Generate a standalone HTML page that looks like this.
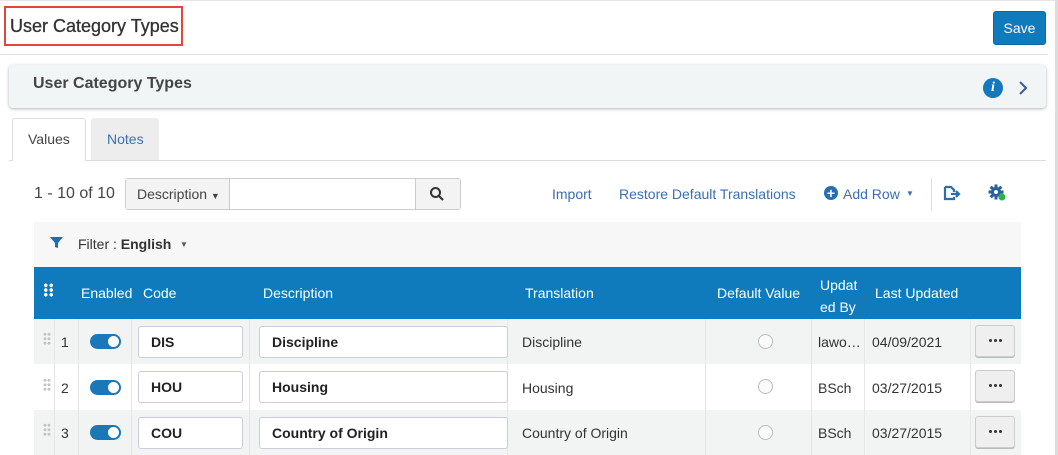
<!DOCTYPE html>
<html><head><meta charset="utf-8"><style>
*{box-sizing:border-box;margin:0;padding:0}
body{width:1058px;height:455px;overflow:hidden;background:#fff;font-family:"Liberation Sans",sans-serif;color:#333;position:relative}
.a{position:absolute}
.t{font-size:14px;white-space:nowrap}
.hd{color:#fff;font-size:14px;position:absolute;white-space:nowrap}
.inp{position:absolute;background:#fff;border:1px solid #ccd;border-radius:3px;font-weight:bold;font-size:14px;padding:7px 0 0 12px;color:#222}
.tog{position:absolute;width:31px;height:15px;background:#1a78b8;border-radius:8px}
.tog:after{content:"";position:absolute;right:2px;top:2px;width:11px;height:11px;border-radius:50%;background:#fff}
.rad{position:absolute;width:15px;height:15px;border-radius:50%;border:1px solid #bbb;background:#fafafa}
.btn{position:absolute;width:40px;height:32px;border:1px solid #ccc;border-radius:3px;background:#efefef;box-shadow:0 1px 0 #bbb}
.btn:after{content:"";position:absolute;left:13px;top:13px;width:3px;height:3px;border-radius:50%;background:#333;box-shadow:5px 0 #333,10px 0 #333}
.vl{position:absolute;width:1px;background:#e6e6e6}
.dots{position:absolute;width:8px;height:14px;background-image:radial-gradient(circle,#c4c4c4 1.4px,transparent 1.6px);background-size:4px 4.5px}
</style></head><body>
<div class="a" style="left:0;top:0;width:1058px;height:1px;background:#e6e6e6"></div>
<div class="a" style="left:1055px;top:0;width:3px;height:455px;background:#ddd"></div>
<div class="a" style="left:4px;top:6px;width:179px;height:40px;border:2px solid #e2463c"></div>
<div class="a" style="left:10px;top:16px;font-size:18px;color:#333;-webkit-text-stroke:0.3px #333">User Category Types</div>
<div class="a" style="left:0;top:54px;width:1048px;height:1px;background:#dedede"></div>
<div class="a" style="left:993px;top:11px;width:53px;height:34px;background:#0f7abc;border-radius:3px;color:#fff;font-size:14px;text-align:center;line-height:33px;border:1px solid #0b67a0">Save</div>
<div class="a" style="left:9px;top:65px;width:1037px;height:43px;background:#f2f5f6;border-radius:4px;box-shadow:0 1px 3px rgba(0,0,0,.3)"></div>
<div class="a" style="left:33px;top:75px;font-size:16px;font-weight:bold;color:#444">User Category Types</div>
<div class="a" style="left:983px;top:78px;width:20px;height:20px;border-radius:50%;background:#1478bd;color:#fff;font:italic bold 14px 'Liberation Serif',serif;text-align:center;line-height:20px">i</div>
<svg class="a" style="left:1017px;top:80px" width="12" height="16"><path d="M3 2l6 6-6 6" stroke="#3a5a99" stroke-width="2" fill="none"/></svg>
<div class="a" style="left:9px;top:160px;width:1037px;height:1px;background:#dcdcdc"></div>
<div class="a" style="left:12px;top:118px;width:74px;height:43px;background:#fff;border:1px solid #ddd;border-bottom:none;border-radius:3px 3px 0 0"></div>
<div class="a t" style="left:28px;top:131px;color:#444">Values</div>
<div class="a" style="left:91px;top:118px;width:68px;height:42px;background:#ededed;border-radius:3px 3px 0 0"></div>
<div class="a t" style="left:107px;top:131px;color:#3a6fb0">Notes</div>
<div class="a" style="left:34px;top:185px;font-size:16px;color:#444">1 - 10 of 10</div>
<div class="a" style="left:125px;top:178px;width:336px;height:32px;border:1px solid #ccc;border-radius:3px;background:#fff"></div>
<div class="a" style="left:126px;top:179px;width:104px;height:30px;background:#f3f3f3;border-right:1px solid #ccc"></div>
<div class="a t" style="left:137px;top:186px;color:#444">Description <span style="font-size:9px">▼</span></div>
<div class="a" style="left:415px;top:179px;width:45px;height:30px;background:#f3f3f3;border-left:1px solid #ccc"></div>
<svg class="a" style="left:429px;top:186px" width="16" height="16"><circle cx="6.5" cy="6.5" r="4.5" stroke="#333" stroke-width="2" fill="none"/><path d="M10 10l4 4" stroke="#333" stroke-width="2.2"/></svg>
<div class="a t" style="left:552px;top:186px;color:#3a6fb0">Import</div>
<div class="a t" style="left:619px;top:186px;color:#3a6fb0">Restore Default Translations</div>
<div class="a" style="left:824px;top:186px;width:14px;height:14px;border-radius:50%;background:#2a6db0;color:#fff;font-weight:bold;font-size:14px;line-height:14px;text-align:center">+</div>
<div class="a t" style="left:843px;top:186px;color:#3a6fb0">Add Row</div>
<div class="a" style="left:906px;top:189px;font-size:8px;color:#3a6fb0">▼</div>
<div class="a" style="left:931px;top:178px;width:1px;height:33px;background:#e0e0e0"></div>
<svg class="a" style="left:943px;top:185px" width="20" height="16"><path d="M2 2h6l3 3v2M2 2v12h9v-2" stroke="#2a6db0" stroke-width="2.2" fill="none"/><path d="M8 9h7M13 6l3 3-3 3" stroke="#2a6db0" stroke-width="2.2" fill="none"/></svg>
<svg class="a" style="left:988px;top:184px" width="20" height="18"><g fill="#2a5f9e" transform="translate(8 8)"><circle r="5"/><rect x="-1.5" y="-7.5" width="3" height="15"/><rect x="-1.5" y="-7.5" width="3" height="15" transform="rotate(45)"/><rect x="-1.5" y="-7.5" width="3" height="15" transform="rotate(90)"/><rect x="-1.5" y="-7.5" width="3" height="15" transform="rotate(135)"/><circle r="2" fill="#fff"/></g><circle cx="14" cy="13" r="3.5" fill="#2db24a"/></svg>
<div class="a" style="left:34px;top:222px;width:987px;height:45px;background:#f7f7f7"></div>
<svg class="a" style="left:49px;top:236px" width="15" height="13"><path d="M1 1h13l-5 6v5l-3-1v-4z" fill="#1a6fb5"/></svg>
<div class="a t" style="left:78px;top:236px;color:#333">Filter : <b>English</b></div>
<div class="a" style="left:180px;top:240px;font-size:8px;color:#555">▼</div>
<div class="a" style="left:34px;top:267px;width:987px;height:52px;background:#0f7abc"></div>
<div class="a" style="left:43px;top:283px;width:11px;height:14px;background-image:radial-gradient(circle,#fff 1.7px,transparent 1.9px);background-size:5.5px 4.7px"></div>
<div class="hd" style="left:81px;top:285px">Enabled</div>
<div class="hd" style="left:143px;top:285px">Code</div>
<div class="hd" style="left:263px;top:285px">Description</div>
<div class="hd" style="left:525px;top:285px">Translation</div>
<div class="hd" style="left:717px;top:285px">Default Value</div>
<div class="hd" style="left:820px;top:274px;line-height:22px">Updat<br>ed By</div>
<div class="hd" style="left:875px;top:285px">Last Updated</div>
<div class="a" style="left:34px;top:319px;width:987px;height:45px;background:#f2f3f3"></div>
<div class="a" style="left:34px;top:364px;width:987px;height:46px;background:#fff"></div>
<div class="a" style="left:34px;top:410px;width:987px;height:45px;background:#f2f3f3"></div>
<div class="vl" style="left:54px;top:319px;height:136px"></div>
<div class="vl" style="left:78px;top:319px;height:136px"></div>
<div class="vl" style="left:131px;top:319px;height:136px"></div>
<div class="vl" style="left:249px;top:319px;height:136px"></div>
<div class="vl" style="left:507px;top:319px;height:136px"></div>
<div class="vl" style="left:705px;top:319px;height:136px"></div>
<div class="vl" style="left:811px;top:319px;height:136px"></div>
<div class="vl" style="left:864px;top:319px;height:136px"></div>
<div class="vl" style="left:970px;top:319px;height:136px"></div>

<div class="dots" style="left:43px;top:332px"></div><div class="a t" style="left:61px;top:334px">1</div>
<div class="tog" style="left:90px;top:334px"></div>
<div class="inp" style="left:138px;top:326px;width:105px;height:32px">DIS</div>
<div class="inp" style="left:259px;top:326px;width:249px;height:32px">Discipline</div>
<div class="a t" style="left:522px;top:334px">Discipline</div>
<div class="rad" style="left:758px;top:334px"></div>
<div class="a t" style="left:818px;top:334px">lawo…</div>
<div class="a t" style="left:872px;top:334px">04/09/2021</div>
<div class="btn" style="left:975px;top:325px"></div>

<div class="dots" style="left:43px;top:378px"></div><div class="a t" style="left:61px;top:380px">2</div>
<div class="tog" style="left:90px;top:380px"></div>
<div class="inp" style="left:138px;top:371px;width:105px;height:32px">HOU</div>
<div class="inp" style="left:259px;top:371px;width:249px;height:32px">Housing</div>
<div class="a t" style="left:522px;top:380px">Housing</div>
<div class="rad" style="left:758px;top:379px"></div>
<div class="a t" style="left:818px;top:380px">BSch</div>
<div class="a t" style="left:872px;top:380px">03/27/2015</div>
<div class="btn" style="left:975px;top:370px"></div>

<div class="dots" style="left:43px;top:423px"></div><div class="a t" style="left:61px;top:425px">3</div>
<div class="tog" style="left:90px;top:425px"></div>
<div class="inp" style="left:138px;top:417px;width:105px;height:32px">COU</div>
<div class="inp" style="left:259px;top:417px;width:249px;height:32px">Country of Origin</div>
<div class="a t" style="left:522px;top:425px">Country of Origin</div>
<div class="rad" style="left:758px;top:425px"></div>
<div class="a t" style="left:818px;top:425px">BSch</div>
<div class="a t" style="left:872px;top:425px">03/27/2015</div>
<div class="btn" style="left:975px;top:416px"></div>
</body></html>
